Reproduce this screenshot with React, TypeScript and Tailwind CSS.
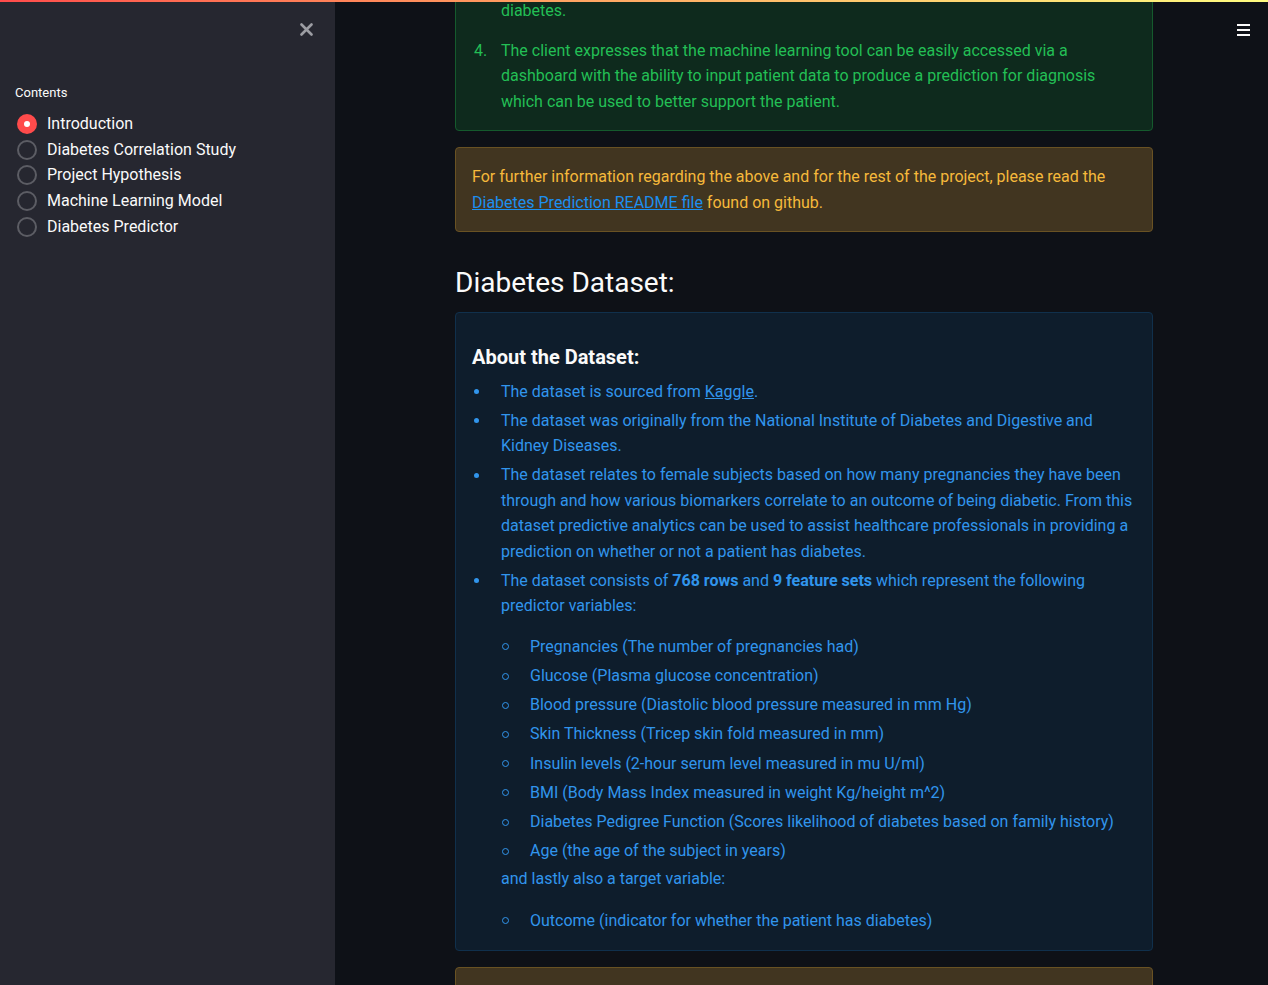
import React from 'react';

const sections = [
  'Introduction',
  'Diabetes Correlation Study',
  'Project Hypothesis',
  'Machine Learning Model',
  'Diabetes Predictor',
];

const predictors = [
  'Pregnancies (The number of pregnancies had)',
  'Glucose (Plasma glucose concentration)',
  'Blood pressure (Diastolic blood pressure measured in mm Hg)',
  'Skin Thickness (Tricep skin fold measured in mm)',
  'Insulin levels (2-hour serum level measured in mu U/ml)',
  'BMI (Body Mass Index measured in weight Kg/height m^2)',
  'Diabetes Pedigree Function (Scores likelihood of diabetes based on family history)',
  'Age (the age of the subject in years)',
];

// filled bullet for the top level list
const Bullet = ({ children }: { children: React.ReactNode }) => (
  <li className="flex">
    <span className="w-[29px] h-[26px] flex items-center shrink-0">
      <span className="ml-[2px] w-[5px] h-[5px] rounded-full bg-[#3195ec]" />
    </span>
    <span className="flex-1">{children}</span>
  </li>
);

// hollow bullet for the nested list
const SubBullet = ({ children }: { children: React.ReactNode }) => (
  <li className="flex">
    <span className="w-[29px] h-[26px] flex items-center shrink-0">
      <span className="ml-[1px] w-[7px] h-[7px] rounded-full border border-[#3195ec]" />
    </span>
    <span className="flex-1">{children}</span>
  </li>
);

function Sidebar() {
  return (
    <aside className="w-[335px] shrink-0 h-full bg-[#262730] relative">
      <div className="flex justify-end pt-[23px] pr-[22px]">
        <svg width="13" height="13" viewBox="0 0 13 13">
          <path d="M1.5 1.5 L11.5 11.5 M11.5 1.5 L1.5 11.5" stroke="#9c9da3" strokeWidth="2.6" strokeLinecap="round" />
        </svg>
      </div>
      <div className="px-[15px] pt-[49px]">
        <div className="text-[13px] leading-[16px] text-[#fafafa]">Contents</div>
        <div className="mt-[10px] flex flex-col">
          {sections.map((s, i) => (
            <div key={s} className="flex items-center h-[25.8px]">
              <span className="w-[20px] h-[20px] ml-[2px] mr-[10px] rounded-full flex items-center justify-center">
                {i === 0 ? (
                  <span className="w-[20px] h-[20px] rounded-full bg-[#ff4b4b] flex items-center justify-center">
                    <span className="w-[6px] h-[6px] rounded-full bg-white" />
                  </span>
                ) : (
                  <span className="w-[20px] h-[20px] rounded-full border-2 border-[#5c5d64]" />
                )}
              </span>
              <span className="text-[16px] text-[#fafafa]">{s}</span>
            </div>
          ))}
        </div>
      </div>
    </aside>
  );
}

export default function App() {
  return (
    <div
      className="w-[1268px] h-[985px] flex overflow-hidden bg-[#0e1117] relative"
      style={{ fontFamily: 'Roboto, "Noto Sans", sans-serif' }}
    >
      {/* top decoration line */}
      <div className="absolute top-0 left-0 right-0 h-[2px] bg-gradient-to-r from-[#ff4b4b] to-[#fffd80] z-10" />

      <Sidebar />

      <main className="flex-1 h-full overflow-hidden relative">
        {/* hamburger menu */}
        <div className="absolute top-[24px] right-[18px] flex flex-col gap-[3px]">
          <span className="w-[13px] h-[2px] bg-[#fafafa]" />
          <span className="w-[13px] h-[2px] bg-[#fafafa]" />
          <span className="w-[13px] h-[2px] bg-[#fafafa]" />
        </div>

        <div className="w-[698px] ml-[120px] mt-[-19px] flex flex-col gap-[16px] text-[16px] leading-[25.6px]">
          {/* success box (scrolled) */}
          <div className="rounded-[4px] border border-[#155a2d] bg-[#0e2a1d] px-[16px] pt-[16px] pb-[16px] text-[#23bf55]">
            <div className="pl-[29px]">diabetes.</div>
            <ol className="mt-[14px]">
              <li className="flex">
                <span className="w-[29px] shrink-0 pl-[2px]">4.</span>
                <span className="flex-1">
                  The client expresses that the machine learning tool can be easily accessed via a dashboard with the ability to input patient data to produce a prediction for diagnosis which can be used to better support the patient.
                </span>
              </li>
            </ol>
          </div>

          {/* warning box */}
          <div className="rounded-[4px] border border-[#695223] bg-[#413520] px-[16px] pt-[16px] pb-[15px] text-[#f6b93b]">
            For further information regarding the above and for the rest of the project, please read the{' '}
            <a className="text-[#1c8ff0] underline">Diabetes Prediction README file</a> found on github.
          </div>

          <h2 className="pt-[22px] text-[28px] leading-[26px] text-[#fafafa] font-normal">Diabetes Dataset:</h2>

          {/* info box */}
          <div className="rounded-[4px] border border-[#10304c] bg-[#0e1d2c] px-[16px] pt-[16px] pb-[16px] text-[#3195ec]">
            <h3 className="mt-[14px] text-[20px] leading-[28px] font-bold text-[#fafafa]">About the Dataset:</h3>
            <ul className="mt-[8px] flex flex-col gap-[3.2px]">
              <Bullet>
                The dataset is sourced from <a className="underline">Kaggle</a>.
              </Bullet>
              <Bullet>
                The dataset was originally from the National Institute of Diabetes and Digestive and Kidney Diseases.
              </Bullet>
              <Bullet>
                The dataset relates to female subjects based on how many pregnancies they have been through and how various biomarkers correlate to an outcome of being diabetic. From this dataset predictive analytics can be used to assist healthcare professionals in providing a prediction on whether or not a patient has diabetes.
              </Bullet>
              <Bullet>
                The dataset consists of <b>768 rows</b> and <b>9 feature sets</b> which represent the following predictor variables:
                <ul className="mt-[15px] flex flex-col gap-[3.2px]">
                  {predictors.map(p => (
                    <SubBullet key={p}>{p}</SubBullet>
                  ))}
                </ul>
                <div className="mt-[2px]">and lastly also a target variable:</div>
                <ul className="mt-[16px]">
                  <SubBullet>Outcome (indicator for whether the patient has diabetes)</SubBullet>
                </ul>
              </Bullet>
            </ul>
          </div>

          {/* next warning box, cut off */}
          <div className="rounded-[4px] border border-[#695223] bg-[#413520] h-[120px]" />
        </div>
      </main>
    </div>
  );
}
